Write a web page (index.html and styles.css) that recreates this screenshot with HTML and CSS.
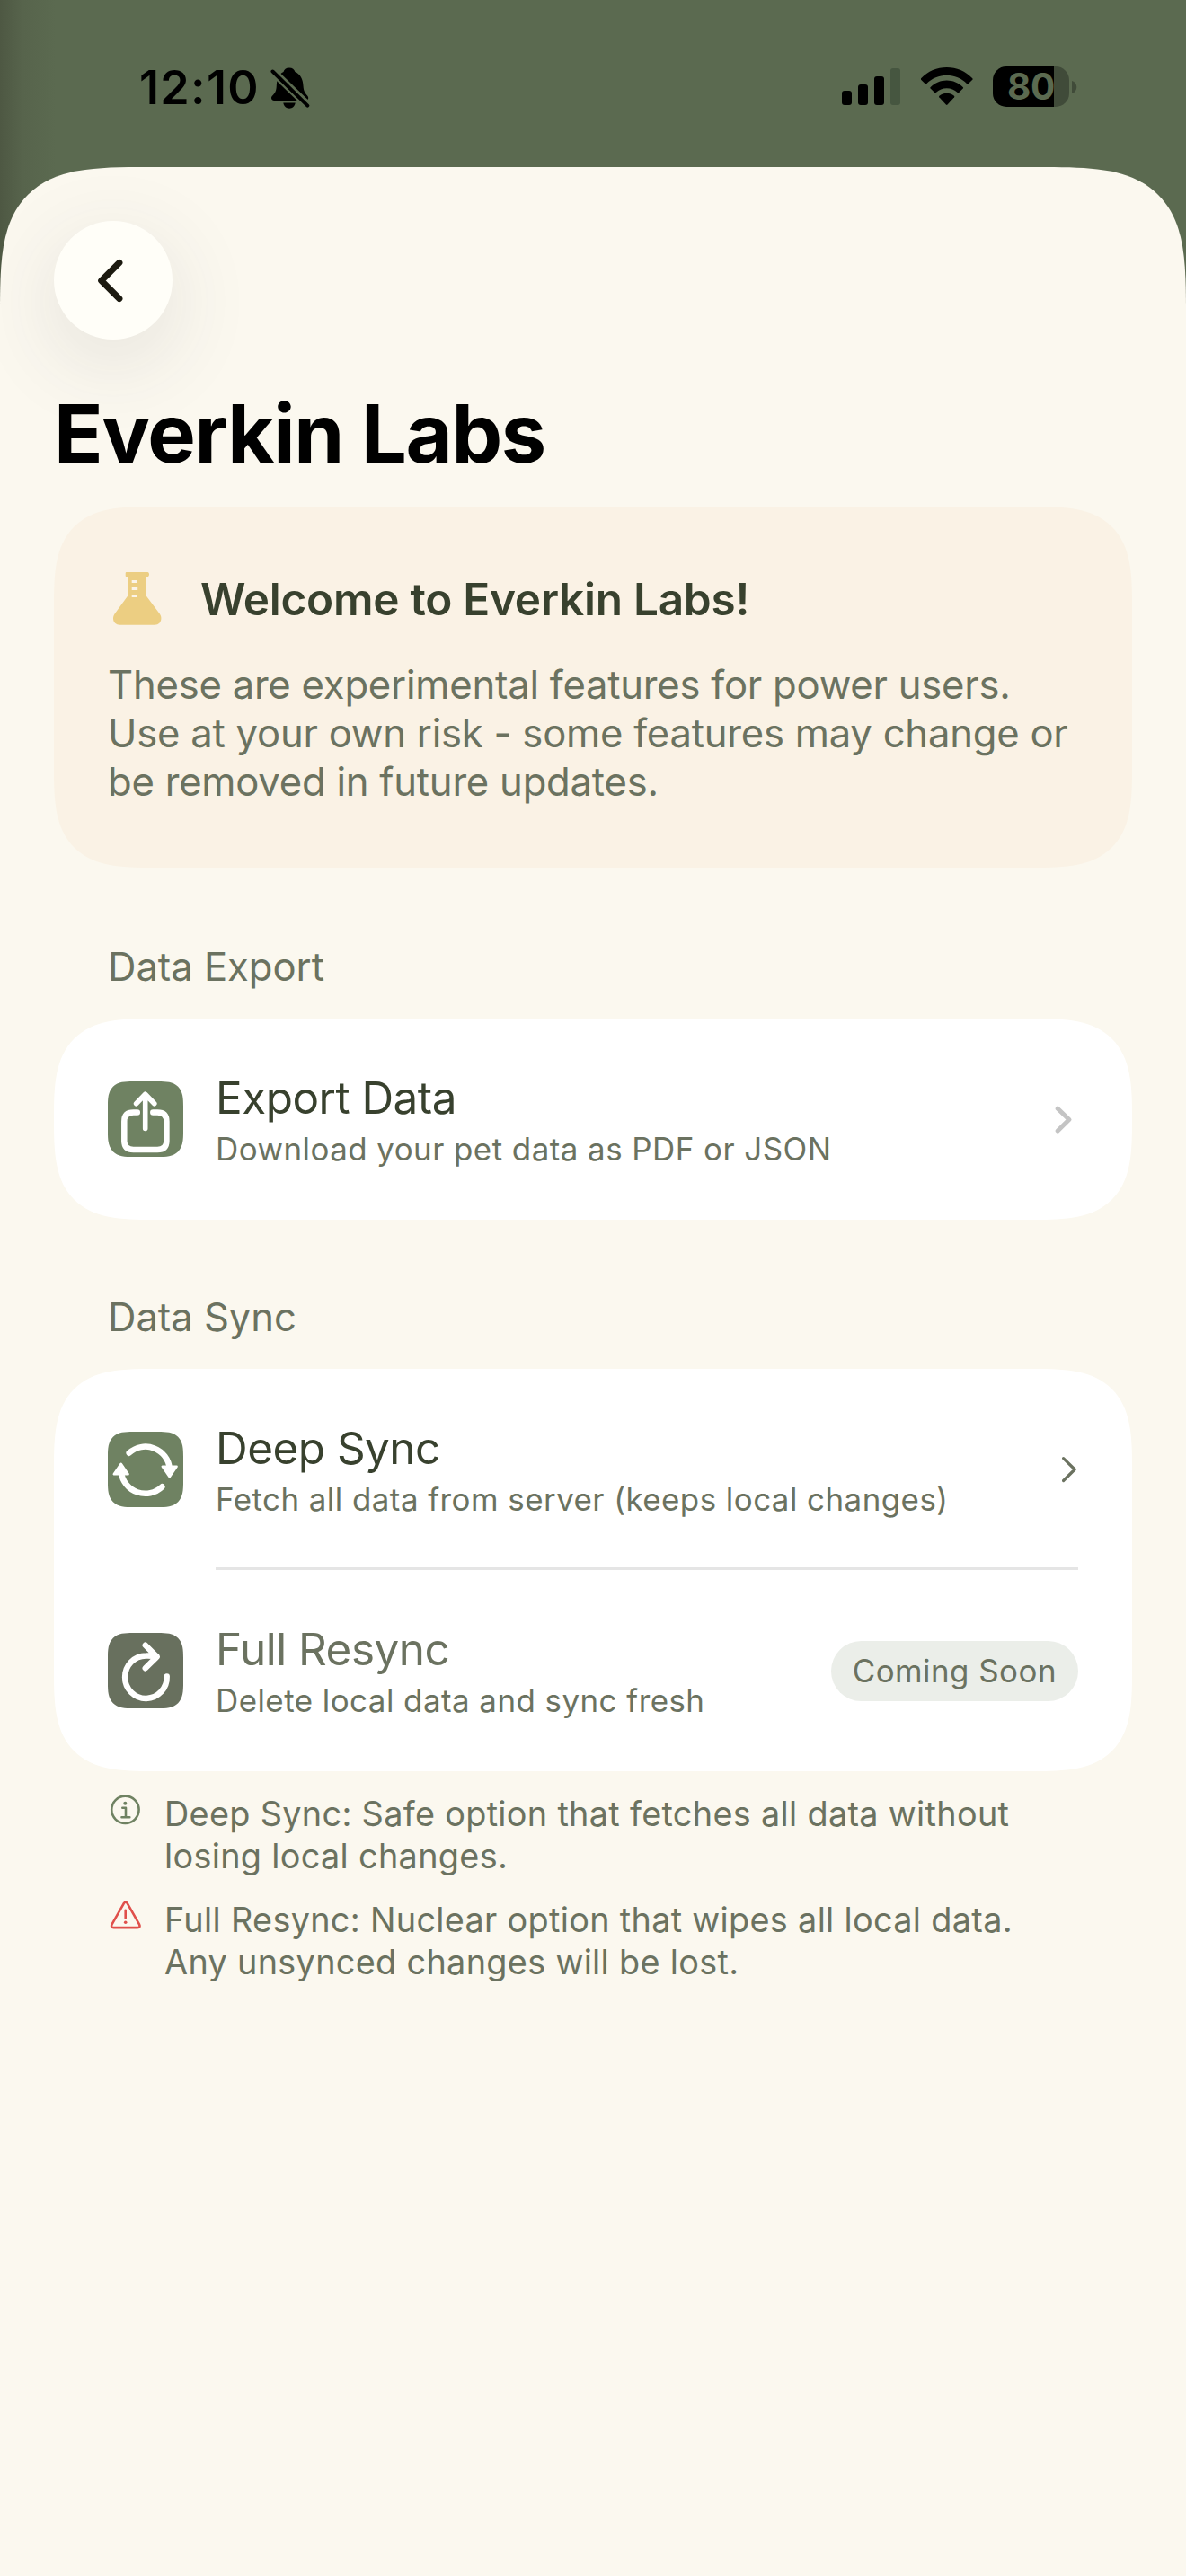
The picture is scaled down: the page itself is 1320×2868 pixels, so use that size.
FILE: index.html
```html
<!DOCTYPE html>
<html lang="en">
<head>
<meta charset="utf-8">
<title>Everkin Labs</title>
<link rel="stylesheet" href="styles.css">
</head>
<body>
<div class="screen">
  <header class="status">
    <span class="clock">12:10</span>
    <svg class="bell" width="44" height="48" viewBox="0 0 44 48">
      <path d="M20.9 .5c3.6 0 5.8 2 6.5 4.6 6 2.500 8.700 8 9.100 15.500.4 6 2.200 8.600 4.600 10.900.9 1 1.100 2 1.100 2.600 0 1.700-1.200 2.900-3.200 2.900H4.200C2.100 37 1 35.800 1 34.100c0-1.200.6-2 1.700-3.200 2.600-2.700 3.900-5 4.100-10.700C7.100 12.800 9.500 7.600 14.500 5.100 15.200 2.500 17.300.5 20.900.5z"/>
      <path d="M14.300 39.500h13.400c-.5 3.600-3.200 6.200-6.700 6.200s-6.200-2.600-6.700-6.200z"/>
      <path class="bell-gap" d="M2.500 4.500 41.300 42"/>
      <path class="bell-slash" d="M2.500 4.500 41.300 42.600"/>
    </svg>
    <svg class="signal" width="66" height="42" viewBox="0 0 66 42">
      <rect x="0" y="26" width="11" height="16" rx="3"/>
      <rect x="18" y="19" width="11" height="23" rx="3"/>
      <rect x="36" y="10" width="11" height="32" rx="3"/>
      <rect class="dim" x="54" y="1" width="11" height="41" rx="3"/>
    </svg>
    <svg class="wifi" width="58" height="42" viewBox="0 0 58 42">
      <path d="M28.700 0C39.500 0 49.700 4.200 57.300 12.200c.5.500.5 1.100 0 1.600L52.700 18.200c-.5.500-1 .5-1.500 0C45.200 12.200 37.200 8.800 28.700 8.800S12.200 12.200 6.200 18.200c-.5.500-1 .5-1.500 0L.1 13.800c-.5-.5-.5-1.100 0-1.600C7.700 4.200 17.900 0 28.700 0z"/>
      <path d="M28.700 14.500c6.800 0 13.100 2.700 18 7.400.6.500.6 1.100.1 1.600l-4.600 4.500c-.5.500-1 .5-1.500 0-3.300-3-7.500-4.700-12-4.700s-8.700 1.700-12 4.700c-.5.500-1 .5-1.500 0l-4.600-4.500c-.5-.5-.5-1.100.1-1.600 4.900-4.700 11.200-7.400 18-7.400z"/>
      <path d="M28.700 28.800c3.100 0 6 1.100 8.300 3 .5.500.5 1 .1 1.500l-7.600 8.200c-.5.500-1.100.5-1.600 0l-7.600-8.200c-.4-.5-.4-1 .1-1.500 2.300-1.900 5.200-3 8.300-3z"/>
    </svg>
    <div class="battery"><span class="level">80</span></div>
    <svg class="nub" width="6" height="14" viewBox="0 0 6 14"><path d="M0 0c3.500 1 5.300 3.700 5.300 7S3.500 13 0 14z"/></svg>
  </header>

  <main class="sheet">
    <button class="back" aria-label="Back">
      <svg width="132" height="132" viewBox="0 0 132 132"><path d="M72.800 46.500 52.800 66.500 72.800 86.500"/></svg>
    </button>
    <h1 class="title">Everkin Labs</h1>

    <section class="welcome">
      <div class="welcome-head">
        <svg class="flask" width="54" height="59" viewBox="0 0 54 59">
          <path d="M15 0h23.300c1 0 1.700.9 1.700 2.400S39.300 5 38.300 5H37v21.700L51.800 46.500c1.200 1.700 1.600 3.200 1.600 4.700 0 4.600-3 7.500-7.200 7.500H7.500C3.200 58.700 0 55.800 0 51.500c0-1.800.5-3.300 1.600-5L16 26.700V5h-1.300c-.6 0-1-.4-1-1V1.300c0-.8.5-1.300 1.300-1.300z"/>
          <path class="mark" d="M20.700 9h5.500v3h-5.500zM20.700 17h6.500v3h-6.500zM20.700 25h6v3h-6z"/>
        </svg>
        <h2 class="welcome-title">Welcome to Everkin Labs!</h2>
      </div>
      <p class="welcome-text">These are experimental features for power users.<br>Use at your own risk - some features may change or<br>be removed in future updates.</p>
    </section>

    <h3 class="label">Data Export</h3>
    <section class="card">
      <div class="row">
        <div class="tile">
          <svg width="84" height="84" viewBox="0 0 84 84">
            <path d="M32.800 34.500H28.500Q18.300 34.500 18.300 44.500V66Q18.300 76 28.500 76H55.200Q65.400 76 65.400 66V44.500Q65.400 34.500 55.200 34.500H50.300"/>
            <path class="shaft" d="M41.700 15V52.500M31.600 24.800 41.700 14.300 51.800 24.800"/>
          </svg>
        </div>
        <div class="text">
          <div class="name">Export Data</div>
          <div class="sub">Download your pet data as PDF or JSON</div>
        </div>
        <svg class="chevron pale" width="26" height="36" viewBox="0 0 26 36"><path d="M3.200 6.200 15.900 18.500 3.200 31"/></svg>
      </div>
    </section>

    <h3 class="label">Data Sync</h3>
    <section class="card">
      <div class="row">
        <div class="tile">
          <svg width="84" height="84" viewBox="0 0 84 84">
            <path d="M23.700 23.700A27 27 0 0 1 68.800 41M60.400 61.300A27 27 0 0 1 14.900 45"/>
            <path class="head" d="M60.800 38.800H76.600L68.700 50.300zM6.800 47.200H22.600L14.700 35.700z"/>
          </svg>
        </div>
        <div class="text">
          <div class="name">Deep Sync</div>
          <div class="sub">Fetch all data from server (keeps local changes)</div>
        </div>
        <svg class="chevron" width="18" height="36" viewBox="0 0 18 36"><path d="M1.600 5.600 14.200 18 1.600 30.500"/></svg>
      </div>
      <div class="divider"></div>
      <div class="row muted">
        <div class="tile">
          <svg width="84" height="84" viewBox="0 0 84 84">
            <path d="M65.700 48.500A23.300 23.700 0 1 1 42.400 25.500Q48 25.200 54.500 26.500M41.800 13.800 54.600 26.600 41.800 39.200"/>
          </svg>
        </div>
        <div class="text">
          <div class="name">Full Resync</div>
          <div class="sub">Delete local data and sync fresh</div>
        </div>
        <span class="pill">Coming Soon</span>
      </div>
    </section>

    <div class="notes">
      <div class="note">
        <svg class="info" width="40" height="40" viewBox="0 0 40 40"><circle cx="19.400" cy="18.800" r="15.200"/><path d="M16.300 16.800H20V27.300M15.500 27.300H24.300"/><circle class="dot" cx="19.300" cy="11.800" r="2"/></svg>
        <p>Deep Sync: Safe option that fetches all data without<br>losing local changes.</p>
      </div>
      <div class="note">
        <svg class="warn" width="40" height="40" viewBox="0 0 40 40"><path d="M17.700 5.300Q19.800 2.200 21.900 5.300L35 28.400Q36.800 32.100 33 32.100H6.600Q2.800 32.100 4.600 28.400zM19.700 12.800V21.600"/><circle class="dot" cx="19.700" cy="26.300" r="1.800"/></svg>
        <p>Full Resync: Nuclear option that wipes all local data.<br>Any unsynced changes will be lost.</p>
      </div>
    </div>
  </main>
</div>
</body>
</html>
```
FILE: styles.css
```css
* { box-sizing: border-box; }

body {
  margin: 0;
  font-family: Inter, "Liberation Sans", sans-serif;
}

h1, h2, h3, p { margin: 0; font-weight: 400; }
svg { display: block; flex: none; }

.screen {
  width: 1320px;
  height: 2868px;
  display: flex;
  flex-direction: column;
  background: linear-gradient(90deg, #4e5843 0, #57644c 26px, #5b6a50 62px);
}

/* Status bar */
.status {
  display: flex;
  align-items: flex-start;
  height: 186px;
  padding: 68px 0 0 155px;
}
.clock {
  width: 146px;
  font-size: 52px;
  font-weight: 600;
  line-height: 60px;
  letter-spacing: 0.026em;
}
.bell { margin-top: 7px; }
.bell-gap { stroke: #5b6a50; stroke-width: 9; }
.bell-slash { stroke: #000; stroke-width: 4; stroke-linecap: round; }
.signal { margin: 7px 0 0 592px; }
.dim { fill: #465640; }
.wifi { margin: 7px 0 0 22px; }
.battery {
  width: 85px;
  height: 45px;
  margin: 6px 3px 0 22px;
  border-radius: 15px;
  background: linear-gradient(90deg, #000 68px, #404b39 68px);
}
.level {
  display: block;
  padding-left: 16px;
  color: #5b6a50;
  font-size: 40.500px;
  font-weight: 700;
  line-height: 45px;
  letter-spacing: -0.01em;
}
.nub { margin-top: 22px; fill: #404b39; }

/* Sheet */
.sheet {
  flex: 1;
  padding: 60px 60px 0;
  border-radius: 165px 165px 0 0;
  corner-shape: superellipse(1.74);
  background: #fbf8ef;
  overflow: hidden;
}
.back {
  display: block;
  width: 132px;
  height: 132px;
  padding: 0;
  border: 0;
  border-radius: 50%;
  background: #fffef8;
  box-shadow: 0 24px 90px 6px rgba(60, 60, 80, 0.1);
}
.back path {
  fill: none;
  stroke: #1c1a10;
  stroke-width: 7.200;
  stroke-linecap: round;
  stroke-linejoin: round;
}
.title {
  margin: 50px 0 26px;
  font-size: 90px;
  font-weight: 700;
  line-height: 110px;
  letter-spacing: -0.0148em;
}

/* Welcome banner */
.welcome {
  height: 402px;
  margin-bottom: 84px;
  padding: 73px 60px 0;
  border-radius: 110px;
  corner-shape: superellipse(1.6);
  background: #faf2e5;
}
.welcome-head { display: flex; gap: 43px; padding-left: 6px; }
.flask { fill: #ecce82; }
.mark { fill: #fbf4e8; }
.welcome-title {
  color: #38412e;
  font-size: 49.500px;
  font-weight: 600;
  line-height: 60px;
  letter-spacing: -0.0052em;
}
.welcome-text {
  margin-top: 39px;
  color: #6b7260;
  font-size: 43.600px;
  line-height: 54px;
  letter-spacing: -0.0052em;
  white-space: nowrap;
}

/* Grouped lists */
.label {
  margin: 82px 0 30px 60px;
  color: #6b7260;
  font-size: 43.600px;
  line-height: 54px;
  letter-spacing: -0.001em;
}
.card {
  padding: 0 60px;
  border-radius: 110px;
  corner-shape: superellipse(1.6);
  background: #fff;
}
.row {
  display: flex;
  align-items: center;
  height: 224px;
}
.tile {
  width: 84px;
  height: 84px;
  margin-right: 36px;
  border-radius: 28px;
  corner-shape: superellipse(1.56);
  background: #6f8262;
}
.tile path {
  fill: none;
  stroke: #fff;
  stroke-width: 6.500;
  stroke-linecap: round;
  stroke-linejoin: round;
}
.tile path:first-child:not(:last-child) { stroke-linecap: round; }
.tile .shaft { stroke-width: 5.600; }
.tile .head { fill: #fff; stroke-width: 2.500; }
.text { flex: 1; }
.name {
  margin-bottom: 6px;
  color: #38412e;
  font-size: 49.400px;
  line-height: 60px;
  letter-spacing: -0.01em;
}
.sub {
  color: #6b7260;
  font-size: 34.900px;
  line-height: 42px;
  letter-spacing: 0.0133em;
}
.muted .tile { background: #68705e; }
.muted .name { color: #6b7260; }
.chevron path {
  fill: none;
  stroke: #6b7260;
  stroke-width: 3.200;
  stroke-linecap: round;
  stroke-linejoin: round;
}
.chevron.pale path { stroke: #c4c4c4; stroke-width: 5; }
.divider {
  height: 3px;
  margin: -3px 0 0 120px;
  background: #e5e5e5;
}
.pill {
  height: 67px;
  padding: 0 24px;
  border-radius: 34px;
  background: #ebeee9;
  color: #6b7260;
  font-size: 34.900px;
  line-height: 67px;
  letter-spacing: 0.0135em;
}

/* Footnotes */
.notes {
  display: flex;
  flex-direction: column;
  gap: 24px;
  padding: 23.500px 60px 0;
}
.note { display: flex; gap: 23px; }
.note p {
  color: #6b7260;
  font-size: 37.800px;
  line-height: 47px;
  letter-spacing: 0.0085em;
  white-space: nowrap;
}
.note path, .note circle {
  fill: none;
  stroke: #6f8262;
  stroke-width: 2.600;
  stroke-linecap: round;
  stroke-linejoin: round;
}
.note .dot { fill: #6f8262; stroke: none; }
.warn path { stroke: #e0504b; }
.note .warn .dot { fill: #e0504b; }
```
